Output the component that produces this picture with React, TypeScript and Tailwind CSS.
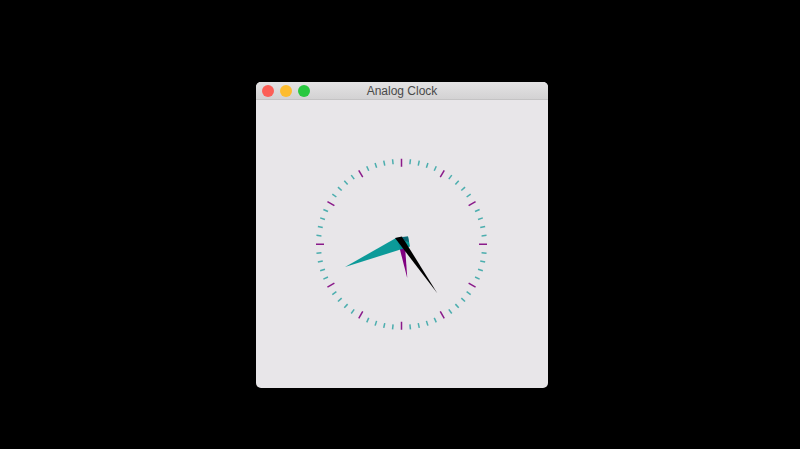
const CX = 145.5;
const CY = 144.3;
const R = 85.5;

function Ticks() {
  const ticks = [];
  for (let i = 0; i < 60; i++) {
    const a = (i * 6 * Math.PI) / 180;
    const hour = i % 5 === 0;
    const len = hour ? 8 : 5;
    const s = Math.sin(a);
    const c = Math.cos(a);
    ticks.push(
      <line
        key={i}
        x1={CX + s * (R - len)}
        y1={CY - c * (R - len)}
        x2={CX + s * R}
        y2={CY - c * R}
        stroke={hour ? "#8a1a8a" : "#2fa3a3"}
        strokeOpacity={hour ? 1 : 0.85}
        strokeWidth={1.5}
      />
    );
  }
  return <>{ticks}</>;
}

function ClockFace() {
  return (
    <svg viewBox="0 0 292 288" className="h-full w-full">
      <Ticks />
      <polygon points="141.5,140 148.5,139 151.3,178.3" fill="#800080" />
      <polygon
        points="89,167 140,138 152,136.5 154,146.5"
        fill="#009695"
        fillOpacity={0.95}
      />
      <polygon points="139,138 146,136.5 181.3,193.3" fill="#000000" />
      <polygon
        points="146,137 152,136.5 153,142 149,141"
        fill="#0a5f6e"
        fillOpacity={0.85}
      />
    </svg>
  );
}

export default function App() {
  return (
    <div className="flex h-[449px] w-[800px] items-start justify-center bg-black pt-[82px]">
      <div className="ml-[4px] flex h-[306px] w-[292px] flex-col overflow-hidden rounded-[5px] bg-[#e8e6e9]">
        <div className="relative flex h-[18px] shrink-0 items-center justify-center border-b border-[#c4c3c4] bg-gradient-to-b from-[#e4e3e4] to-[#d3d2d3]">
          <div className="absolute left-[6px] top-[3px] flex gap-[6px]">
            <span className="h-[12px] w-[12px] rounded-full bg-[#fc5f57]" />
            <span className="h-[12px] w-[12px] rounded-full bg-[#fdbc2e]" />
            <span className="h-[12px] w-[12px] rounded-full bg-[#29c840]" />
          </div>
          <span
            className="text-[12px] leading-none text-[#4a4a4a]"
            style={{ fontFamily: "'Liberation Sans', Arial, sans-serif" }}
          >
            Analog Clock
          </span>
        </div>
        <div className="flex-1">
          <ClockFace />
        </div>
      </div>
    </div>
  );
}
